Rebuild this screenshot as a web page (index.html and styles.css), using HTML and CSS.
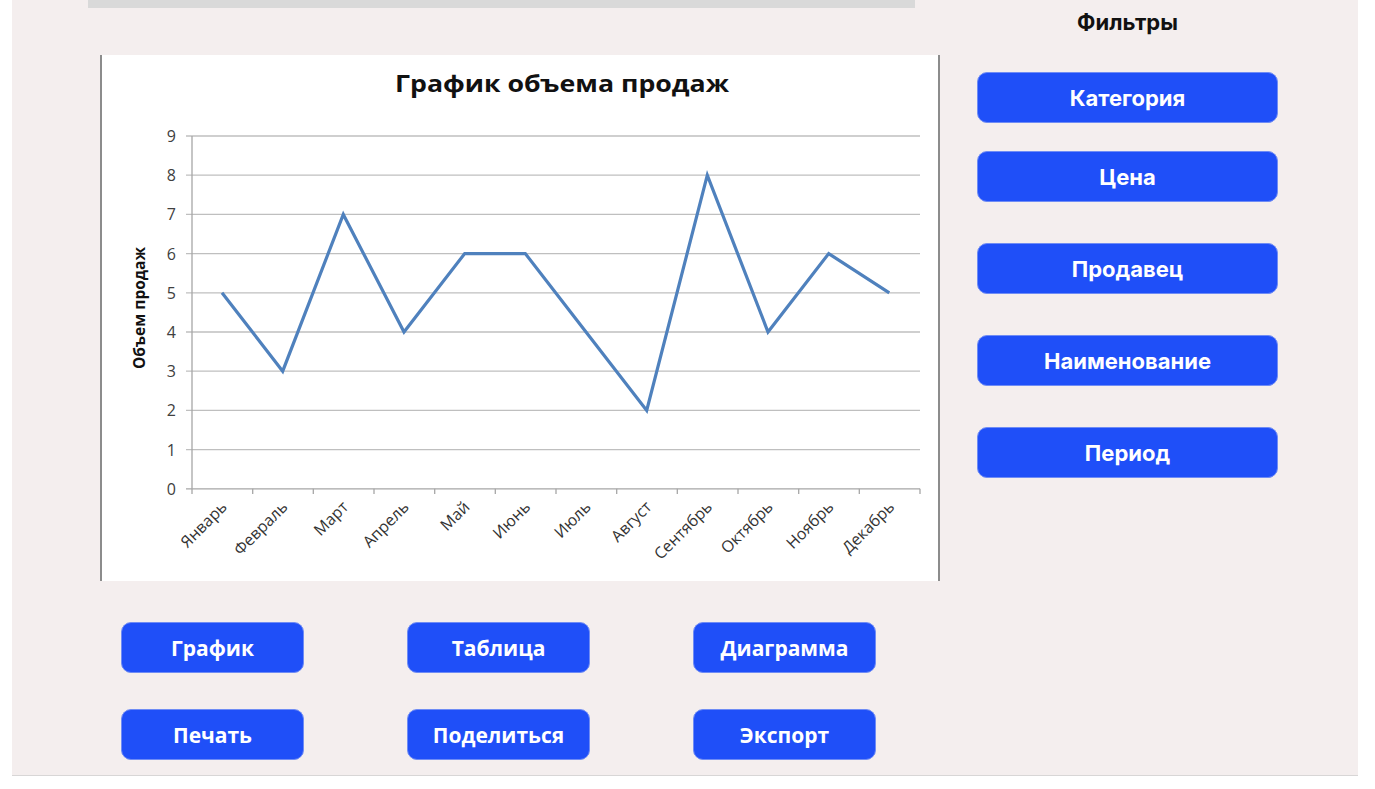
FILE: index.html
```html
<!DOCTYPE html>
<html lang="ru">
<head>
<meta charset="utf-8">
<title>График объема продаж</title>
<link rel="stylesheet" href="styles.css">
</head>
<body>
<div class="screen">
  <div class="main">
    <div class="topbar"></div>
    <div class="chart">
      <svg class="chart-svg" width="836" height="526" viewBox="0 0 836 526">
        <text class="title" x="460" y="37" text-anchor="middle" textLength="334" lengthAdjust="spacingAndGlyphs">График объема продаж</text>
        <g class="grid">
          <line x1="84" y1="81" x2="818" y2="81"/>
          <line x1="84" y1="120.2" x2="818" y2="120.2"/>
          <line x1="84" y1="159.4" x2="818" y2="159.4"/>
          <line x1="84" y1="198.6" x2="818" y2="198.6"/>
          <line x1="84" y1="237.8" x2="818" y2="237.8"/>
          <line x1="84" y1="277" x2="818" y2="277"/>
          <line x1="84" y1="316.2" x2="818" y2="316.2"/>
          <line x1="84" y1="355.4" x2="818" y2="355.4"/>
          <line x1="84" y1="394.6" x2="818" y2="394.6"/>
        </g>
        <g class="axis">
          <line x1="84" y1="433.8" x2="818" y2="433.8"/>
          <line x1="90" y1="81" x2="90" y2="433.8"/>
          <line x1="90" y1="433.8" x2="90" y2="439"/>
          <line x1="150.7" y1="433.8" x2="150.7" y2="439"/>
          <line x1="211.3" y1="433.8" x2="211.3" y2="439"/>
          <line x1="272" y1="433.8" x2="272" y2="439"/>
          <line x1="332.7" y1="433.8" x2="332.7" y2="439"/>
          <line x1="393.3" y1="433.8" x2="393.3" y2="439"/>
          <line x1="454" y1="433.8" x2="454" y2="439"/>
          <line x1="514.7" y1="433.8" x2="514.7" y2="439"/>
          <line x1="575.3" y1="433.8" x2="575.3" y2="439"/>
          <line x1="636" y1="433.8" x2="636" y2="439"/>
          <line x1="696.7" y1="433.8" x2="696.7" y2="439"/>
          <line x1="757.3" y1="433.8" x2="757.3" y2="439"/>
          <line x1="818" y1="433.8" x2="818" y2="439"/>
        </g>
        <g class="ylabels" text-anchor="end">
          <text x="74" y="87">9</text>
          <text x="74" y="126">8</text>
          <text x="74" y="165">7</text>
          <text x="74" y="205">6</text>
          <text x="74" y="244">5</text>
          <text x="74" y="283">4</text>
          <text x="74" y="322">3</text>
          <text x="74" y="361">2</text>
          <text x="74" y="401">1</text>
          <text x="74" y="440">0</text>
        </g>
        <text class="ytitle" transform="translate(43 253) rotate(-90)" text-anchor="middle">Объем продаж</text>
        <polyline class="series" points="120,237.8 180.7,316.2 241.3,159.4 302,277 362.7,198.6 423.3,198.6 484,277 544.7,355.4 605.3,120.2 666,277 726.7,198.6 787.3,237.8"/>
        <g class="xlabels" text-anchor="end">
          <text transform="translate(126 453) rotate(-45)">Январь</text>
          <text transform="translate(186.7 453) rotate(-45)">Февраль</text>
          <text transform="translate(247.3 453) rotate(-45)">Март</text>
          <text transform="translate(308 453) rotate(-45)">Апрель</text>
          <text transform="translate(368.7 453) rotate(-45)">Май</text>
          <text transform="translate(429.3 453) rotate(-45)">Июнь</text>
          <text transform="translate(490 453) rotate(-45)">Июль</text>
          <text transform="translate(550.7 453) rotate(-45)">Август</text>
          <text transform="translate(611.3 453) rotate(-45)">Сентябрь</text>
          <text transform="translate(672 453) rotate(-45)">Октябрь</text>
          <text transform="translate(732.7 453) rotate(-45)">Ноябрь</text>
          <text transform="translate(793.3 453) rotate(-45)">Декабрь</text>
        </g>
      </svg>
    </div>
    <div class="actions">
      <button class="btn">График</button>
      <button class="btn">Таблица</button>
      <button class="btn">Диаграмма</button>
      <button class="btn">Печать</button>
      <button class="btn">Поделиться</button>
      <button class="btn">Экспорт</button>
    </div>
  </div>
  <aside class="filters">
    <h2 class="filters-title">Фильтры</h2>
    <div class="filter-list">
      <button class="filter">Категория</button>
      <button class="filter filter-second">Цена</button>
      <button class="filter">Продавец</button>
      <button class="filter">Наименование</button>
      <button class="filter">Период</button>
    </div>
  </aside>
</div>
</body>
</html>
```

FILE: styles.css
```css
html, body {
  margin: 0;
  padding: 0;
  background: #ffffff;
}

body {
  font-family: "Open Sans", "Liberation Sans", sans-serif;
}

.screen {
  margin-left: 12px;
  width: 1346px;
  height: 776px;
  background: #f4eeee;
  border-bottom: 1px solid #d8d6d6;
  display: flex;
  box-sizing: border-box;
}

.main {
  padding-left: 76px;
  width: 852px;
  display: flex;
  flex-direction: column;
}

.topbar {
  width: 827px;
  height: 8px;
  background: #d9d9d9;
}

.chart {
  margin-top: 47px;
  margin-left: 12px;
  width: 840px;
  height: 526px;
  background: #ffffff;
  border-left: 2px solid #8c8c8c;
  border-right: 2px solid #8c8c8c;
  box-sizing: border-box;
}

.chart-svg {
  display: block;
}

.title {
  font-family: "Open Sans", sans-serif;
  font-weight: 700;
  font-size: 24px;
  fill: #111111;
}

.grid line {
  stroke: #bfbfbf;
  stroke-width: 1.3;
}

.axis line {
  stroke: #a6a6a6;
  stroke-width: 1.3;
}

.ylabels text {
  font-family: "Open Sans", sans-serif;
  font-size: 16px;
  fill: #404040;
}

.ytitle {
  font-family: "Open Sans", sans-serif;
  font-weight: 700;
  font-size: 15.5px;
  fill: #111111;
}

.xlabels text {
  font-family: "Open Sans", sans-serif;
  font-size: 16px;
  fill: #333333;
}

.series {
  fill: none;
  stroke: #4f81bd;
  stroke-width: 3.2;
  stroke-linejoin: miter;
}

.actions {
  margin-top: 41px;
  padding-left: 33px;
  display: grid;
  grid-template-columns: repeat(3, 183px);
  column-gap: 103px;
  row-gap: 36px;
}

.btn,
.filter {
  border: 1px solid #6f8cf5;
  background: #1f4ff8;
  color: #ffffff;
  font-weight: 700;
  cursor: pointer;
  padding: 0;
  box-sizing: border-box;
}

.btn {
  height: 51px;
  border-radius: 10px;
  font-family: "Open Sans", sans-serif;
  font-size: 21px;
}

.filters {
  margin-left: 37px;
  width: 301px;
  padding-top: 10px;
}

.filters-title {
  margin: 0;
  text-align: center;
  font-family: Inter, "Noto Sans", sans-serif;
  font-weight: 700;
  font-size: 22px;
  line-height: 24px;
  color: #111111;
}

.filter-list {
  margin-top: 38px;
  display: flex;
  flex-direction: column;
  gap: 41px;
}

.filter {
  width: 301px;
  height: 51px;
  border-radius: 10px;
  font-family: Inter, "Noto Sans", sans-serif;
  font-size: 22px;
}

.filter-second {
  margin-top: -13px;
}
```
